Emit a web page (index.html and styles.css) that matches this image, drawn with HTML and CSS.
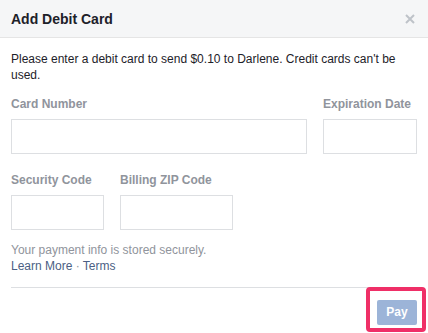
FILE: index.html
```html
<!DOCTYPE html>
<html>
<head>
<meta charset="utf-8">
<link rel="stylesheet" href="styles.css">
</head>
<body>
<div class="dialog">
  <div class="header">
    <div class="title">Add Debit Card</div>
    <svg class="close" width="10" height="10" viewBox="0 0 10 10"><path d="M1 1L9 9M9 1L1 9" stroke="#bec3c9" stroke-width="2"/></svg>
  </div>
  <div class="body">
    <p class="intro">Please enter a debit card to send $0.10 to Darlene. Credit cards can't be used.</p>
    <div class="row row1">
      <div class="field">
        <div class="label">Card Number</div>
        <div class="input card"></div>
      </div>
      <div class="field">
        <div class="label">Expiration Date</div>
        <div class="input exp"></div>
      </div>
    </div>
    <div class="row row2">
      <div class="field">
        <div class="label">Security Code</div>
        <div class="input sec"></div>
      </div>
      <div class="field">
        <div class="label">Billing ZIP Code</div>
        <div class="input zip"></div>
      </div>
    </div>
    <p class="note">Your payment info is stored securely.<br><span class="link">Learn More</span> <span class="dot">·</span> <span class="link">Terms</span></p>
  </div>
  <div class="footer">
    <div class="pay">Pay</div>
  </div>
  <div class="highlight"></div>
</div>
</body>
</html>
```
FILE: styles.css
```css
html, body {
  margin: 0;
  padding: 0;
  background: #fff;
}
body {
  font-family: "Liberation Sans", Arial, sans-serif;
  font-size: 12px;
  color: #1d2129;
}
.dialog {
  position: relative;
  width: 428px;
  height: 333px;
  overflow: hidden;
}
.header {
  height: 37px;
  background: #f5f6f7;
  border-bottom: 1px solid #e5e5e5;
  display: flex;
  align-items: center;
  justify-content: space-between;
  padding: 0 13px 0 11px;
}
.title {
  font-size: 14px;
  font-weight: bold;
  line-height: 16px;
  color: #1d2129;
}
.close {
  display: block;
}
.body {
  padding: 13px 11px 0 11px;
}
.intro {
  margin: 0;
  line-height: 16px;
}
.row {
  display: flex;
  justify-content: space-between;
}
.row1 {
  margin-top: 13px;
}
.row2 {
  margin-top: 18px;
  justify-content: flex-start;
  gap: 16px;
}
.label {
  font-weight: bold;
  color: #90949c;
  line-height: 16px;
  margin-bottom: 7px;
}
.input {
  height: 33px;
  border: 1px solid #dddfe2;
  box-sizing: content-box;
}
.card { width: 294px; }
.exp { width: 92px; }
.sec { width: 91px; }
.zip { width: 111px; }
.note {
  margin: 12px 0 0 0;
  line-height: 16px;
  color: #90949c;
}
.link {
  color: #4b5f84;
}
.dot {
  color: #90949c;
}
.footer {
  margin: 13px 11px 0 11px;
  border-top: 1px solid #dddfe2;
  padding-top: 12px;
  display: flex;
  justify-content: flex-end;
}
.pay {
  width: 40px;
  height: 25px;
  line-height: 25px;
  text-align: center;
  background: #9cb4d8;
  color: #fff;
  font-weight: bold;
  font-size: 12px;
  border-radius: 2px;
}
.highlight {
  position: absolute;
  left: 366px;
  top: 287px;
  width: 52px;
  height: 37px;
  border: 4px solid #ef2f67;
  border-radius: 4px;
}
```
